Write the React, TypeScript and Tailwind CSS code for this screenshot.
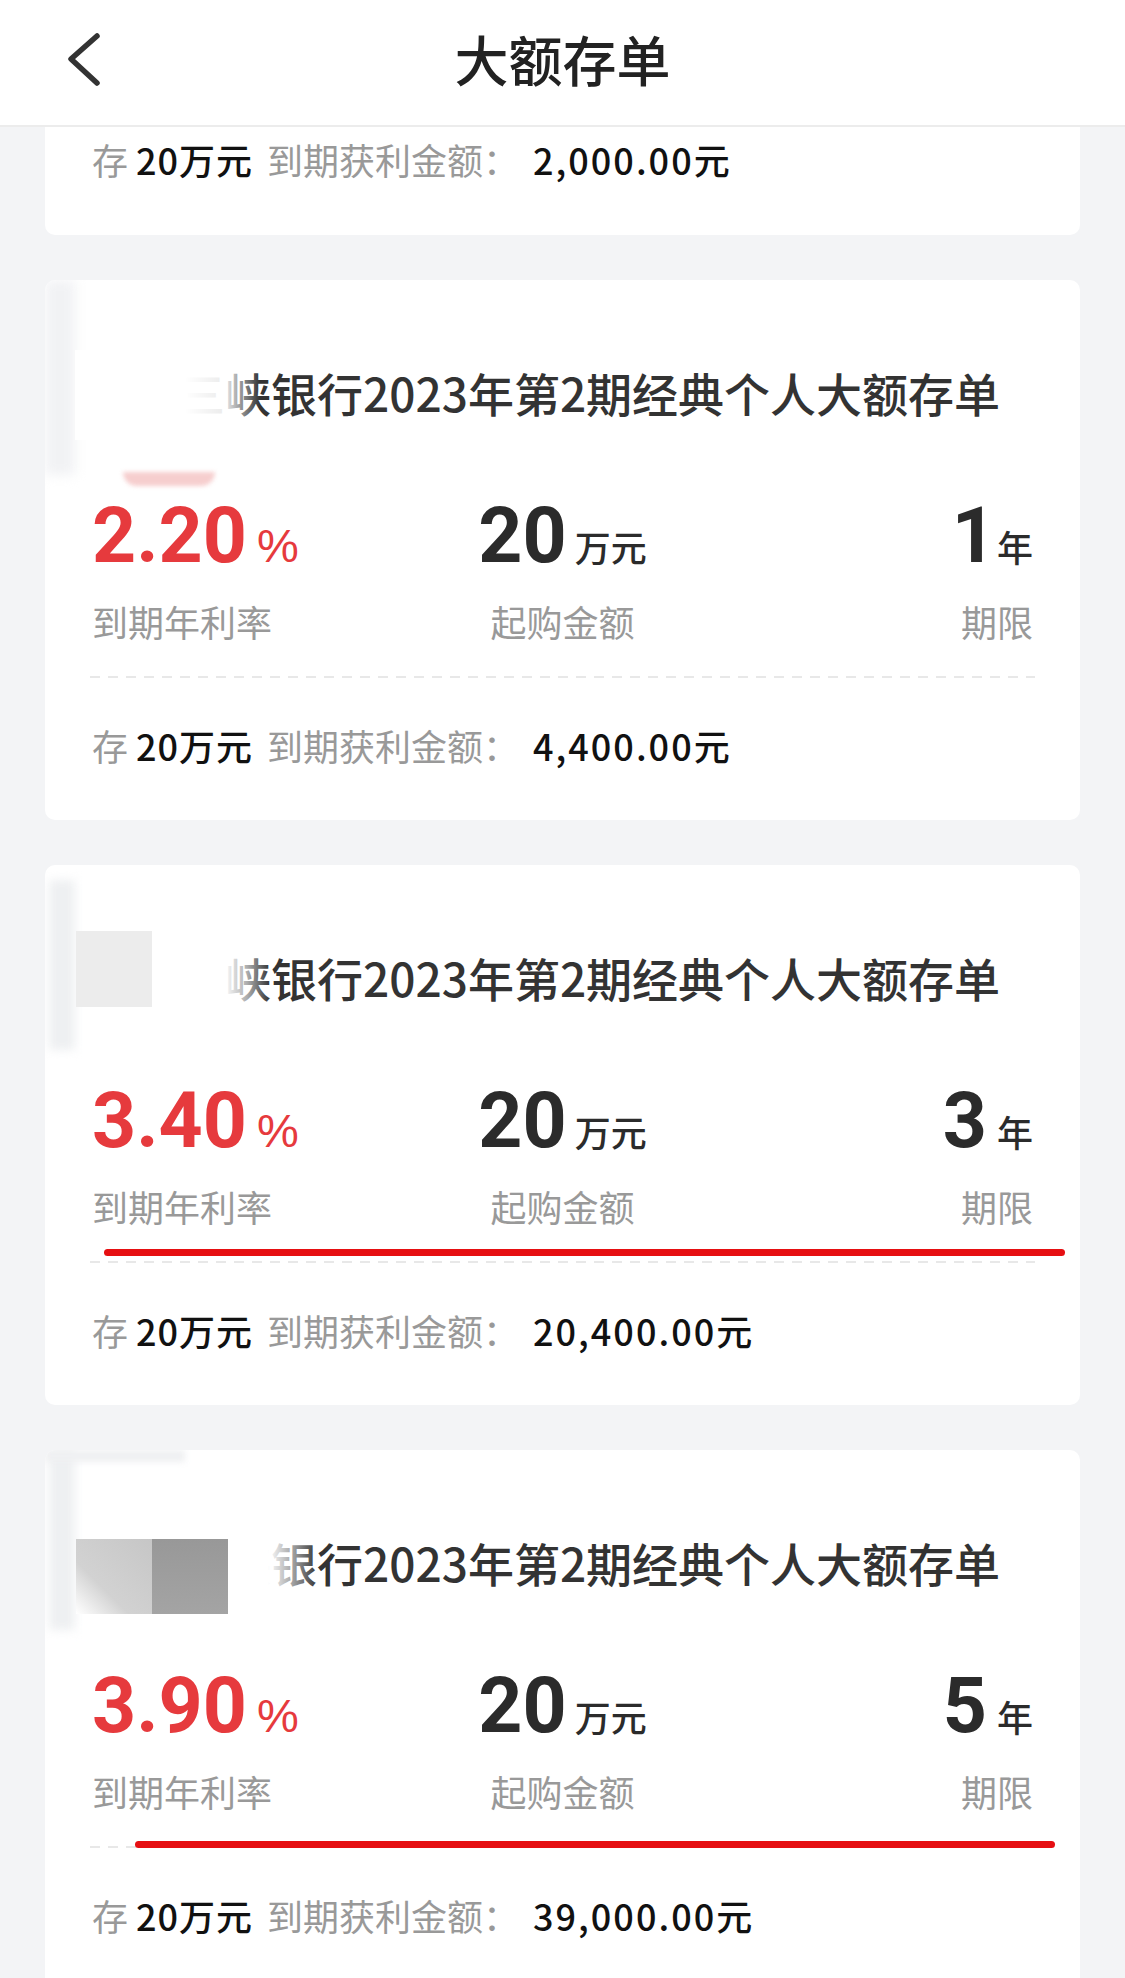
import React from "react";

type Card = {
  rate: string;
  term: string;
  profit: string;
  variant: 1 | 2 | 3;
};

const cards: Card[] = [
  { rate: "2.20", term: "1", profit: "4,400.00", variant: 1 },
  { rate: "3.40", term: "3", profit: "20,400.00", variant: 2 },
  { rate: "3.90", term: "5", profit: "39,000.00", variant: 3 },
];

function Footer({ profit }: { profit: string }) {
  return (
    <div className="flex items-center h-[44px] pl-[47px] text-[36px] leading-[44px] whitespace-nowrap">
      <span className="text-[#999999]">存</span>
      <span className="ml-[8px] text-[#111111] font-medium tracking-[1px]">20万元</span>
      <span className="ml-[14px] text-[#999999]">到期获利金额：</span>
      <span className="ml-[14px] text-[#111111] font-medium tracking-[2px]">{profit}元</span>
    </div>
  );
}

function Redaction({ variant }: { variant: 1 | 2 | 3 }) {
  if (variant === 1) {
    return (
      <>
        <div className="absolute left-0 top-0 w-[30px] h-[195px] bg-[#f1f2f4] blur-[6px]" />
        <div className="absolute left-[30px] top-[70px] w-[185px] h-[90px] bg-[linear-gradient(to_right,#ffffff_0px,#ffffff_110px,rgba(255,255,255,0.9)_150px,rgba(255,255,255,0)_185px)]" />
        <div className="absolute left-[78px] top-[192px] w-[92px] h-[14px] rounded-b-full bg-[#f4c2c2] blur-[2px] opacity-80" />
      </>
    );
  }
  if (variant === 2) {
    return (
      <>
        <div className="absolute left-[4px] top-[15px] w-[26px] h-[170px] bg-[#eef0f2] blur-[5px]" />
        <div className="absolute left-[31px] top-[66px] w-[76px] h-[76px] bg-[#ececec]" />
        <div className="absolute left-[107px] top-[70px] w-[125px] h-[90px] bg-[linear-gradient(to_right,#ffffff_0px,#ffffff_72px,rgba(255,255,255,0.6)_95px,rgba(255,255,255,0)_118px)]" />
      </>
    );
  }
  return (
    <>
      <div className="absolute left-[4px] top-0 w-[26px] h-[180px] bg-[#eef0f2] blur-[5px]" />
      <div className="absolute left-0 top-0 w-[140px] h-[12px] bg-[#eff0f2] blur-[3px]" />
      <div className="absolute left-[31px] top-[89px] w-[76px] h-[75px] bg-[linear-gradient(45deg,#ffffff_0%,#d2d2d2_35%,#c6c6c6_100%)]" />
      <div className="absolute left-[107px] top-[89px] w-[76px] h-[75px] bg-[linear-gradient(to_bottom,#989898,#a4a4a4)]" />
      <div className="absolute left-[183px] top-[70px] w-[100px] h-[90px] bg-[linear-gradient(to_right,#ffffff_0px,#ffffff_40px,rgba(255,255,255,0.6)_62px,rgba(255,255,255,0)_90px)]" />
    </>
  );
}

function DepositCard({ card }: { card: Card }) {
  return (
    <div className="relative h-[540px] shrink-0 rounded-[10px] bg-white pt-[84px] overflow-hidden">
      <div className="flex items-center h-[56px] pl-[47px]">
        <div className="w-[64px] h-[64px] mr-[23px] rounded-full bg-white" />
        <span className="text-[46px] leading-[56px] font-medium text-[#333333] whitespace-nowrap">
          三峡银行2023年第2期经典个人大额存单
        </span>
      </div>

      <div className="mt-[78px] grid grid-cols-3 px-[47px]">
        <div className="flex flex-col items-start">
          <div className="flex items-baseline h-[77px]">
            <span className="font-['Roboto',sans-serif] font-bold text-[77px] leading-[77px] text-[#e63a3d]">
              {card.rate}
            </span>
            <span className="ml-[10px] font-['Liberation_Sans',sans-serif] text-[47px] leading-none text-[#e63a3d]">%</span>
          </div>
          <span className="mt-[25px] text-[36px] leading-[43px] text-[#999999]">到期年利率</span>
        </div>
        <div className="flex flex-col items-center">
          <div className="flex items-baseline h-[77px]">
            <span className="font-['Roboto',sans-serif] font-bold text-[77px] leading-[77px] text-[#2b2b2b]">20</span>
            <span className="ml-[8px] text-[36px] leading-none font-medium text-[#2b2b2b]">万元</span>
          </div>
          <span className="mt-[25px] text-[36px] leading-[43px] text-[#999999]">起购金额</span>
        </div>
        <div className="flex flex-col items-end">
          <div className="flex items-baseline h-[77px]">
            <span className="font-['Roboto',sans-serif] font-bold text-[77px] leading-[77px] text-[#2b2b2b]">
              {card.term}
            </span>
            <span
              className={
                card.term === "1"
                  ? "ml-[1px] text-[36px] leading-none font-medium text-[#2b2b2b]"
                  : "ml-[10px] text-[36px] leading-none font-medium text-[#2b2b2b]"
              }
            >
              年
            </span>
          </div>
          <span className="mt-[25px] text-[36px] leading-[43px] text-[#999999]">期限</span>
        </div>
      </div>

      <div className="mt-[33px] mx-[45px] h-[2px] bg-[repeating-linear-gradient(to_right,#e8e8e8_0px,#e8e8e8_10px,transparent_10px,transparent_18px)]" />

      <div className="mt-[45px]">
        <Footer profit={card.profit} />
      </div>

      <Redaction variant={card.variant} />

      {card.variant === 2 && (
        <div className="absolute left-[59px] top-[384px] w-[961px] h-[7px] rounded-full bg-[#e60f12]" />
      )}
      {card.variant === 3 && (
        <div className="absolute left-[90px] top-[391px] w-[920px] h-[7px] rounded-full bg-[#e60f12]" />
      )}
    </div>
  );
}

export default function App() {
  return (
    <div className="w-[1125px] h-[1978px] overflow-hidden bg-[#f3f4f6] font-['Noto_Sans_CJK_SC',sans-serif]">
      <header className="h-[127px] pb-[8px] bg-white border-b-2 border-[#ececec] grid grid-cols-[140px_1fr_140px] items-center">
        <div className="pl-[66px] flex items-center">
          <svg width="36" height="56" viewBox="0 0 36 56" fill="none">
            <path d="M31 5 L5 28 L31 52" stroke="#333333" strokeWidth="5.5" strokeLinecap="round" strokeLinejoin="round" />
          </svg>
        </div>
        <h1 className="text-center text-[54px] leading-[60px] font-medium text-[#222222]">大额存单</h1>
        <div />
      </header>

      <div className="px-[45px] flex flex-col gap-[45px]">
        <div className="h-[108px] rounded-b-[10px] bg-white pt-[10px]">
          <Footer profit="2,000.00" />
        </div>
        {cards.map((c) => (
          <DepositCard key={c.rate} card={c} />
        ))}
      </div>
    </div>
  );
}
